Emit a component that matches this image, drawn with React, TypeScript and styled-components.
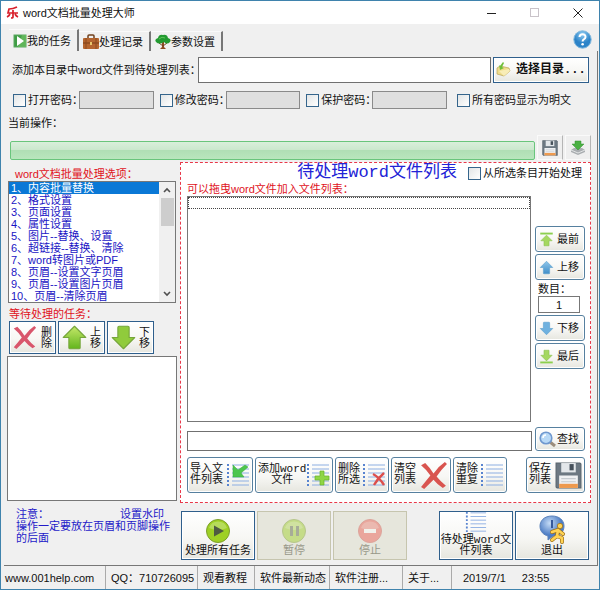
import React, { useState } from "react";
import styled, { createGlobalStyle, css } from "styled-components";

const sans = `"Liberation Sans", "Noto Sans CJK SC", sans-serif`;
const mono = `"Liberation Mono", "Noto Sans CJK SC", monospace`;

const GlobalStyle = createGlobalStyle`
  *, *::before, *::after { box-sizing: border-box; }
  body { margin: 0; background: #f0f0f0; }
  button, input { font: inherit; color: inherit; margin: 0; }
  svg { display: block; flex: none; }
`;

const Window = styled.div`
  min-height: 100vh;
  display: flex;
  flex-direction: column;
  border: 1px solid #3f83ad;
  background: #f0f0f0;
  color: #111;
  font: 11px/12px ${sans};
`;

const TitleBar = styled.header`
  height: 23px;
  display: flex;
  align-items: center;
  background: #fff;
  padding-left: 5px;
`;

const AppTitle = styled.h1`
  margin: 0 auto 0 4px;
  font-size: 11px;
  font-weight: 400;
`;

const CaptionButton = styled.button`
  width: 43px;
  height: 22px;
  padding: 0;
  display: grid;
  place-items: center;
  border: 0;
  background: none;
`;

const TabBar = styled.nav`
  height: 27px;
  display: flex;
  align-items: flex-end;
  padding: 0 7px 0 8px;
`;

const Tab = styled.button<{ $active?: boolean }>`
  height: ${(p) => (p.$active ? 22 : 20)}px;
  display: flex;
  align-items: center;
  padding: 0 6px 0 4px;
  border: 0;
  border-top: 1px solid #fafafa;
  border-right: 2px solid #777;
  background: #f0f0f0;
`;

const HelpButton = styled.button`
  margin: 0 0 2px auto;
  padding: 0;
  border: 0;
  background: none;
`;

const Body = styled.main`
  flex: 1;
  display: flex;
  flex-direction: column;
  margin-right: 1px;
  padding: 6px 6px 5px;
  border-right: 1px solid #777;
`;

const PathRow = styled.div`
  display: flex;
  align-items: center;
  gap: 2px;
  padding: 0 2px 0 5px;
`;

const PathLabel = styled.label`
  width: 184px;
  white-space: nowrap;
`;

const TextInput = styled.input`
  flex: 1;
  min-width: 0;
  height: 26px;
  padding: 0 4px;
  border: 1px solid #707070;
  background: #fff;
`;

const raised = css`
  border: 1px solid #2f5f8c;
  background: linear-gradient(#fff, #f7f7f4 55%, #e6e6df);
  box-shadow: inset 0 0 0 1px #fff;
`;

const BrowseButton = styled.button`
  ${raised}
  width: 96px;
  height: 26px;
  display: flex;
  align-items: center;
  gap: 5px;
  padding: 0 2px;
  font: 700 12px/14px ${mono};
  white-space: nowrap;
`;

const PasswordRow = styled.div`
  display: flex;
  align-items: center;
  gap: 6px;
  margin-top: 8px;
  padding: 0 20px 0 6px;
`;

const PasswordGroup = styled.div`
  flex: 1;
  display: flex;
  align-items: center;
`;

const CheckLabel = styled.label`
  display: flex;
  align-items: center;
  gap: 2px;
  white-space: nowrap;
`;

const CheckBox = styled.input.attrs({ type: "checkbox" })`
  appearance: none;
  width: 13px;
  height: 13px;
  flex: none;
  border: 1px solid #35658c;
  background: linear-gradient(135deg, #e2e5e6, #fff);
  &:checked { background: #35658c; }
`;

const PasswordLabel = styled(CheckLabel)`
  width: 66px;
`;

const ShowAllLabel = styled(CheckLabel)`
  margin-left: 4px;
`;

const PasswordInput = styled.input`
  flex: 1;
  width: 0;
  min-width: 0;
  height: 18px;
  border: 1px solid #8a8a8a;
  background: #dfdfdf;
`;

const CurrentLabel = styled.div`
  margin-top: 8px;
  padding-left: 1px;
`;

const ProgressRow = styled.div`
  display: flex;
  align-items: flex-end;
  gap: 2px;
  margin-top: 6px;
  padding-left: 3px;
`;

const Progress = styled.div`
  flex: 1;
  height: 19px;
  border: 1px solid #69c57c;
  border-radius: 2px;
  background: linear-gradient(#d9efdb, #cbe8ce 45%, #b0dfb5 50%, #b9e6bd);
`;

const FlatButton = styled.button`
  width: 26px;
  height: 25px;
  padding: 0;
  display: grid;
  place-items: center;
  border: 1px solid #fafafa;
  border-right-color: #b5b5b5;
  background: #efefef;
`;

const Workspace = styled.div`
  flex: 1;
  display: grid;
  grid-template-columns: 170px minmax(0, 1fr);
  grid-template-rows: 1fr auto;
  column-gap: 3px;
  margin-top: 2px;
`;

const Sidebar = styled.section`
  display: flex;
  flex-direction: column;
  padding: 6px 0 2px;
`;

const RedLabel = styled.h2<{ $indent?: number }>`
  margin: 0;
  padding-left: ${(p) => p.$indent ?? 0}px;
  font-size: 11px;
  line-height: 13px;
  font-weight: 400;
  color: #e0131c;
`;

const OptionFrame = styled.div`
  display: flex;
  height: 122px;
  margin: 0 1px 5px;
  border: 1px solid #777;
  background: #fff;
`;

const OptionList = styled.ul`
  flex: 1;
  margin: 0;
  padding: 0;
  list-style: none;
  color: #1a14c4;
`;

const OptionItem = styled.li<{ $selected: boolean }>`
  height: 12px;
  padding-left: 2px;
  white-space: nowrap;
  cursor: default;
  ${(p) => p.$selected && css`background: #0a78d6; color: #fff;`}
`;

const ScrollTrack = styled.div`
  width: 16px;
  display: flex;
  flex-direction: column;
  align-items: center;
  background: #f0f0f0;
`;

const ScrollArrow = styled.button`
  height: 16px;
  padding: 0;
  display: grid;
  place-items: center;
  border: 0;
  background: none;
`;

const ScrollThumb = styled.div`
  width: 13px;
  height: 28px;
  margin-bottom: auto;
  background: #cdcdcd;
`;

const TaskButtons = styled.div`
  display: flex;
  gap: 2px;
  margin: 0 0 2px 2px;
`;

const TaskButton = styled.button`
  ${raised}
  width: 47px;
  height: 33px;
  display: flex;
  align-items: center;
  justify-content: space-between;
  padding: 0 3px 0 2px;
  line-height: 11px;
`;

const VerticalText = styled.span`
  width: 11px;
  text-align: center;
`;

const TaskBox = styled.div`
  flex: 1;
  border: 1px solid #777;
  background: #fff;
`;

const FilePanel = styled.section`
  display: flex;
  flex-direction: column;
  padding: 0 5px 9px 6px;
  border: 1px dashed #e8384a;
  background: #fff;
`;

const PanelHeader = styled.div`
  display: flex;
  align-items: center;
  justify-content: flex-end;
  gap: 11px;
  height: 20px;
  padding-right: 3px;
`;

const PanelTitle = styled.h2`
  margin: 0;
  font: 400 17px/20px ${mono};
  color: #2222d6;
`;

const FileArea = styled.div`
  flex: 1;
  display: flex;
  gap: 4px;
`;

const FileList = styled.div`
  flex: 1;
  border: 1px solid #777;
  background: #fff;
`;

const FocusRow = styled.div`
  height: 12px;
  border: 1px dotted #444;
`;

const SideColumn = styled.div`
  width: 50px;
  display: flex;
  flex-direction: column;
  gap: 2px;
  padding-top: 30px;
`;

const SideButton = styled.button`
  ${raised}
  width: 50px;
  height: 26px;
  display: flex;
  align-items: center;
  justify-content: space-between;
  padding: 0 5px 0 3px;
  border-color: #56809f;
  border-radius: 3px;
  white-space: nowrap;
`;

const CountLabel = styled.label`
  padding-left: 3px;
  line-height: 14px;
  white-space: nowrap;
`;

const CountInput = styled.input`
  display: block;
  width: 42px;
  height: 17px;
  padding: 0;
  border: 1px solid #777;
  background: #fff;
  text-align: center;
`;

const SearchRow = styled.div`
  display: flex;
  align-items: flex-end;
  gap: 3px;
  margin-top: 5px;
`;

const SearchInput = styled(TextInput)`
  height: 20px;
`;

const SearchButton = styled(SideButton)`
  height: 24px;
`;

const Toolbar = styled.div`
  display: flex;
  gap: 2px;
  margin-top: 6px;
`;

const ToolButton = styled.button<{ $width: number; $end?: boolean }>`
  ${raised}
  width: ${(p) => p.$width}px;
  height: 36px;
  display: flex;
  align-items: center;
  justify-content: space-between;
  padding: 0 2px;
  border-color: #56809f;
  border-radius: 3px;
  font: 11px/11px ${mono};
  white-space: pre;
  ${(p) => p.$end && css`margin-left: auto;`}
`;

const Note = styled.p`
  margin: 5px 0 0;
  padding: 0 3px 0 9px;
  white-space: pre-wrap;
  color: #2419c8;
`;

const NoteGap = styled.span`
  display: inline-block;
  width: 71px;
`;

const Actions = styled.div`
  display: flex;
  gap: 2px;
  padding: 8px 2px 0 1px;
`;

const ActionButton = styled.button<{ $end?: boolean }>`
  ${raised}
  width: 74px;
  height: 49px;
  display: flex;
  flex-direction: column;
  align-items: center;
  justify-content: flex-end;
  gap: 2px;
  padding: 0 0 2px;
  font: 11px/11px ${mono};
  white-space: pre;
  ${(p) => p.$end && css`margin-left: auto;`}
  &:disabled {
    color: #98988a;
    border-color: #c6c5ae;
    background: #e6e6dc;
    box-shadow: none;
  }
  &:disabled svg { opacity: 0.45; }
`;

const StatusBar = styled.footer`
  height: 24px;
  display: flex;
  margin: 0 1px 0 3px;
  border-top: 1px solid #777;
`;

const StatusCell = styled.div<{ $width?: number }>`
  ${(p) => (p.$width ? css`width: ${p.$width}px;` : css`flex: 1;`)}
  display: flex;
  align-items: center;
  gap: 16px;
  padding-left: ${(p) => (p.$width ? 5 : 11)}px;
  border-right: ${(p) => (p.$width ? "1px solid #aaa" : "0")};
  white-space: nowrap;
  &:first-child { padding-left: 1px; }
`;

const StatusLink = styled.a`
  color: inherit;
  text-decoration: none;
`;

function Gradients() {
  return (
    <svg width="0" height="0" aria-hidden="true">
      <defs>
        <linearGradient id="green" x2="0" y2="1">
          <stop stopColor="#c5e86a" />
          <stop offset="1" stopColor="#63b51d" />
        </linearGradient>
        <linearGradient id="blue" x2="0" y2="1">
          <stop stopColor="#8fc6ea" />
          <stop offset="1" stopColor="#3f8ec8" />
        </linearGradient>
        <radialGradient id="bubble" cx=".4" cy=".3">
          <stop stopColor="#c5dcf6" />
          <stop offset="1" stopColor="#4c7cc4" />
        </radialGradient>
        <radialGradient id="help" cx=".5" cy=".2">
          <stop stopColor="#8fccf2" />
          <stop offset="1" stopColor="#2c83c8" />
        </radialGradient>
      </defs>
    </svg>
  );
}

type ArrowProps = { size: number; fill: string; stroke: string; down?: boolean; bar?: boolean };

function Arrow({ size, fill, stroke, down, bar }: ArrowProps) {
  return (
    <svg width={size} height={size} viewBox="0 0 24 24">
      <g transform={down ? "rotate(180 12 12)" : undefined}>
        <path
          d={bar ? "M12 5 21 14H16V22H8V14H3Z" : "M12 2 22 12H17V21Q17 22 16 22H8Q7 22 7 21V12H2Z"}
          fill={fill}
          stroke={stroke}
          strokeLinejoin="round"
        />
        {bar && <rect x="2" y="1" width="20" height="3" fill="#8ccf4f" />}
      </g>
    </svg>
  );
}

function Floppy({ size }: { size: number }) {
  return (
    <svg width={size} height={size} viewBox="0 0 26 26">
      <path d="M1 1H24L25 2V25H2L1 24Z" fill="#6c7882" stroke="#59646d" />
      <rect x="6" y="1" width="14" height="9" fill="#e3e7ea" />
      <rect x="14" y="2" width="4" height="6" fill="#46515b" />
      <rect x="4" y="13" width="18" height="12" fill="#eff1f3" />
      <path d="M6 16H20M6 19H20" stroke="#c5cbd0" />
      <rect x="4" y="21" width="18" height="4" fill="#ee9a4e" />
    </svg>
  );
}

function Cross({ size, fill }: { size: number; fill: string }) {
  return (
    <svg width={size} height={size} viewBox="0 0 28 28">
      <path
        d="M2 4 6 2Q11 7 14 12Q19 5 25 1L27 3Q21 9 17 15Q21 20 26 24L23 26Q18 23 14 18Q9 23 5 27L2 25Q7 19 11 14Q7 8 2 4Z"
        fill={fill}
      />
    </svg>
  );
}

function ListIcon({ mark, size = 24 }: { mark?: "import" | "add" | "delete"; size?: number }) {
  return (
    <svg width={size} height={size} viewBox="0 0 24 24">
      <path d="M2 1V24" stroke="#5884d0" strokeWidth="2" strokeDasharray="2 2" />
      <path d="M6 2H23M6 6H23M6 10H23M6 14H23M6 18H23M6 22H23" stroke="#8caee2" />
      {mark === "import" && (
        <path d="M7 2V14H18L15 10 22 4 19 2 12 7Z" fill="#4dc64e" stroke="#36a839" strokeWidth=".5" />
      )}
      {mark === "add" && (
        <path d="M14 8H18V13H23V17H18V22H14V17H9V13H14Z" fill="#8fd645" stroke="#68b22a" strokeWidth=".7" />
      )}
      {mark === "delete" && (
        <path d="M11 11Q17 14 22 22M22 10Q16 15 12 22" stroke="#dc4f4c" strokeWidth="2.4" fill="none" />
      )}
    </svg>
  );
}

function Disc({ kind }: { kind: "play" | "pause" | "stop" }) {
  const stop = kind === "stop";
  return (
    <svg width="26" height="26" viewBox="0 0 26 26">
      <circle cx="13" cy="13" r="11.5" fill={stop ? "#ef5a50" : "#9ed024"} stroke={stop ? "#d0554e" : "#7d9f2c"} />
      <path d="M4 10A9.5 9.5 0 0 1 22 10Q13 14 4 10Z" fill="#fff" opacity=".25" />
      {kind === "play" && <path d="M9 7.5V18.5L19 13Z" fill="#4f5a42" />}
      {kind === "pause" && <path d="M9 8H12V18H9ZM15 8H18V18H15Z" fill="#5b6848" />}
      {stop && <rect x="7" y="11" width="12" height="4" fill="#fff" />}
    </svg>
  );
}

const LogoIcon = () => (
  <svg width="13" height="13" viewBox="0 0 13 13">
    <path
      d="M11 1Q7 3 3 3L2 7H12M7 4V11Q7 12 5 12M4 8Q3 10 1 11M9 8Q10 10 12 11"
      fill="none"
      stroke="#d81f2a"
      strokeWidth="1.7"
    />
  </svg>
);

const TaskIcon = () => (
  <svg width="14" height="14" viewBox="0 0 14 14">
    <rect x="1" y="1" width="12" height="12" fill="#3f9d45" stroke="#5aa860" />
    <path d="M9 1H13V13H5Z" fill="#74c468" opacity=".6" />
    <path d="M4 2V12L11 7Z" fill="#fff" />
  </svg>
);

const CaseIcon = () => (
  <svg width="16" height="16" viewBox="0 0 16 16">
    <path d="M5 4V2Q5 1 6 1H10Q11 1 11 2V4" fill="none" stroke="#70401d" strokeWidth="1.5" />
    <rect x="0" y="4" width="16" height="11" rx="1" fill="#b5652f" />
    <path d="M0 9H16" stroke="#7a3e17" />
    <path d="M3 4V15M13 4V15" stroke="#8d4b1f" />
    <rect x="7" y="8" width="2" height="3" fill="#eac66c" />
  </svg>
);

const TreeIcon = () => (
  <svg width="16" height="16" viewBox="0 0 16 16">
    <path d="M7 8H9V13L11 15H5L7 13Z" fill="#8d4b22" />
    <path d="M4 9 8 12 12 9" stroke="#7a4020" fill="none" />
    <path d="M1 8Q-1 5 3 4Q4 0 8 1Q12 0 13 4Q17 5 15 8Q12 11 9 8Q4 11 1 8Z" fill="#239a31" />
    <path d="M4 5Q7 2 10 4" stroke="#5fc85a" fill="none" />
  </svg>
);

const HelpIcon = () => (
  <svg width="19" height="19" viewBox="0 0 19 19">
    <circle cx="9.5" cy="9.5" r="8.7" fill="url(#help)" stroke="#82b9de" />
    <path d="M6.5 7Q6.7 4.3 9.6 4.3T12.5 7Q12.5 8.5 10.8 9.4Q9.6 10 9.6 11.5" fill="none" stroke="#fff" strokeWidth="2" />
    <circle cx="9.6" cy="14.2" r="1.3" fill="#fff" />
  </svg>
);

const FolderIcon = () => (
  <svg width="15" height="18" viewBox="0 0 15 18">
    <path d="M1 7 4 5 13 7 14 10 8 15 1 13Z" fill="#efdc8a" stroke="#b9a457" strokeWidth=".7" />
    <path d="M3 10 13 8 14 10 8 15Z" fill="#f8edb6" />
    <path d="M7 1 4 5 3 4 4 9 8 7 6 6 8 2Z" fill="#6fbf3a" />
  </svg>
);

const DownloadIcon = () => (
  <svg width="16" height="17" viewBox="0 0 16 17">
    <path d="M1 11 4 9H12L15 11V13L8 16 1 13Z" fill="#a9adb0" />
    <path d="M1 11 8 14 15 11" fill="none" stroke="#e2e4e5" />
    <path d="M5 2H11V5H14L8 11 2 5H5Z" fill="#4bb043" stroke="#328d30" strokeWidth=".5" />
  </svg>
);

const SearchIcon = () => (
  <svg width="17" height="17" viewBox="0 0 17 17">
    <path d="M11 11 16 15" stroke="#9b8d7c" strokeWidth="3" />
    <circle cx="7" cy="7" r="5.8" fill="#b8d9f6" stroke="#6f98cf" strokeWidth="1.6" />
    <path d="M4 7Q4 4 7 4" stroke="#fff" strokeWidth="1.5" fill="none" />
  </svg>
);

const ExitIcon = () => (
  <svg width="29" height="30" viewBox="0 0 29 30">
    <path d="M14 2C6 2 2 7 2 12C2 18 6 21 10 22L10 26 15 22C22 22 26 18 26 12C26 6 21 2 14 2Z" fill="url(#bubble)" stroke="#5c83bb" />
    <path d="M14 6V14" stroke="#35599b" strokeWidth="2" />
    <g fill="none" stroke="#9c701a" strokeWidth="4" strokeLinecap="round" strokeLinejoin="round">
      <path d="M20 16 19 22 24 24 24 28M19 22 14 26M14 18 20 16 25 20" />
    </g>
    <g fill="none" stroke="#ffd354" strokeWidth="2.6" strokeLinecap="round" strokeLinejoin="round">
      <path d="M20 16 19 22 24 24 24 28M19 22 14 26M14 18 20 16 25 20" />
    </g>
    <circle cx="22" cy="12" r="2.7" fill="#ffd354" stroke="#9c701a" strokeWidth=".8" />
  </svg>
);

const Chevron = ({ down }: { down?: boolean }) => (
  <svg width="8" height="6" viewBox="0 0 8 6">
    <path d={down ? "M1 1 4 4 7 1" : "M1 5 4 2 7 5"} fill="none" stroke="#505050" strokeWidth="1.6" />
  </svg>
);

const options = [
  "1、内容批量替换",
  "2、格式设置",
  "3、页面设置",
  "4、属性设置",
  "5、图片--替换、设置",
  "6、超链接--替换、清除",
  "7、word转图片或PDF",
  "8、页眉--设置文字页眉",
  "9、页眉--设置图片页眉",
  "10、页眉--清除页眉",
];

const passwords = ["打开密码：", "修改密码：", "保护密码："];

export default function App() {
  const [selected, setSelected] = useState(0);
  return (
    <Window>
      <GlobalStyle />
      <TitleBar>
        <LogoIcon />
        <AppTitle>word文档批量处理大师</AppTitle>
        <CaptionButton aria-label="最小化">
          <svg width="10" height="10"><path d="M0 5.5H9" stroke="#222" /></svg>
        </CaptionButton>
        <CaptionButton aria-label="最大化" disabled>
          <svg width="10" height="10"><rect x=".5" y=".5" width="8" height="8" fill="none" stroke="#c9c3c9" /></svg>
        </CaptionButton>
        <CaptionButton aria-label="关闭">
          <svg width="10" height="10"><path d="M.5.5 9.5 9.5M9.5.5.5 9.5" stroke="#222" /></svg>
        </CaptionButton>
      </TitleBar>

      <TabBar>
        <Tab $active><TaskIcon />我的任务</Tab>
        <Tab><CaseIcon />处理记录</Tab>
        <Tab><TreeIcon />参数设置</Tab>
        <HelpButton aria-label="帮助"><HelpIcon /></HelpButton>
      </TabBar>

      <Body>
        <PathRow>
          <PathLabel htmlFor="path">添加本目录中word文件到待处理列表：</PathLabel>
          <TextInput id="path" />
          <BrowseButton><FolderIcon />选择目录...</BrowseButton>
        </PathRow>

        <PasswordRow>
          {passwords.map((label) => (
            <PasswordGroup key={label}>
              <PasswordLabel><CheckBox />{label}</PasswordLabel>
              <PasswordInput type="password" aria-label={label} disabled />
            </PasswordGroup>
          ))}
          <ShowAllLabel><CheckBox />所有密码显示为明文</ShowAllLabel>
        </PasswordRow>

        <CurrentLabel>当前操作：</CurrentLabel>
        <ProgressRow>
          <Progress role="progressbar" aria-label="当前操作" />
          <FlatButton aria-label="保存"><Floppy size={16} /></FlatButton>
          <FlatButton aria-label="下载"><DownloadIcon /></FlatButton>
        </ProgressRow>

        <Workspace>
          <Sidebar>
            <RedLabel $indent={8}>word文档批量处理选项：</RedLabel>
            <OptionFrame>
              <OptionList role="listbox">
                {options.map((text, i) => (
                  <OptionItem
                    key={text}
                    role="option"
                    aria-selected={i === selected}
                    $selected={i === selected}
                    onClick={() => setSelected(i)}
                  >
                    {text}
                  </OptionItem>
                ))}
              </OptionList>
              <ScrollTrack>
                <ScrollArrow aria-label="向上滚动"><Chevron /></ScrollArrow>
                <ScrollThumb />
                <ScrollArrow aria-label="向下滚动"><Chevron down /></ScrollArrow>
              </ScrollTrack>
            </OptionFrame>
            <RedLabel $indent={2}>等待处理的任务：</RedLabel>
            <TaskButtons>
              <TaskButton><Cross size={25} fill="#d9566c" /><VerticalText>删除</VerticalText></TaskButton>
              <TaskButton>
                <Arrow size={27} fill="url(#green)" stroke="#76a63a" />
                <VerticalText>上移</VerticalText>
              </TaskButton>
              <TaskButton>
                <Arrow size={27} fill="#90cb3c" stroke="#76a63a" down />
                <VerticalText>下移</VerticalText>
              </TaskButton>
            </TaskButtons>
            <TaskBox />
          </Sidebar>

          <FilePanel>
            <PanelHeader>
              <PanelTitle>待处理word文件列表</PanelTitle>
              <CheckLabel><CheckBox />从所选条目开始处理</CheckLabel>
            </PanelHeader>
            <RedLabel>可以拖曳word文件加入文件列表：</RedLabel>
            <FileArea>
              <FileList><FocusRow /></FileList>
              <SideColumn>
                <SideButton><Arrow size={15} fill="#a5d860" stroke="#8cc152" bar />最前</SideButton>
                <SideButton><Arrow size={15} fill="url(#blue)" stroke="#5c9fce" />上移</SideButton>
                <CountLabel>数目：<CountInput defaultValue="1" /></CountLabel>
                <SideButton><Arrow size={15} fill="#6fb1df" stroke="#5c9fce" down />下移</SideButton>
                <SideButton><Arrow size={15} fill="#a5d860" stroke="#8cc152" bar down />最后</SideButton>
              </SideColumn>
            </FileArea>
            <SearchRow>
              <SearchInput aria-label="查找" />
              <SearchButton><SearchIcon />查找</SearchButton>
            </SearchRow>
            <Toolbar>
              <ToolButton $width={66}>{"导入文\n件列表"}<ListIcon mark="import" /></ToolButton>
              <ToolButton $width={78}>{"添加word\n文件"}<ListIcon mark="add" /></ToolButton>
              <ToolButton $width={54}>{"删除\n所选"}<ListIcon mark="delete" /></ToolButton>
              <ToolButton $width={60}>{"清空\n列表"}<Cross size={29} fill="#d9544f" /></ToolButton>
              <ToolButton $width={54}>{"清除\n重复"}<ListIcon /></ToolButton>
              <ToolButton $width={59} $end>{"保存\n列表"}<Floppy size={27} /></ToolButton>
            </Toolbar>
          </FilePanel>

          <Note>注意：<NoteGap />设置水印<br />操作一定要放在页眉和页脚操作的后面</Note>
          <Actions>
            <ActionButton><Disc kind="play" />处理所有任务</ActionButton>
            <ActionButton disabled><Disc kind="pause" />暂停</ActionButton>
            <ActionButton disabled><Disc kind="stop" />停止</ActionButton>
            <ActionButton $end><ListIcon size={22} />{"待处理word文\n件列表"}</ActionButton>
            <ActionButton><ExitIcon />退出</ActionButton>
          </Actions>
        </Workspace>
      </Body>

      <StatusBar>
        <StatusCell $width={102}><StatusLink href="#home">www.001help.com</StatusLink></StatusCell>
        <StatusCell $width={92}>QQ：710726095</StatusCell>
        <StatusCell $width={57}><StatusLink href="#tutorial">观看教程</StatusLink></StatusCell>
        <StatusCell $width={75}><StatusLink href="#news">软件最新动态</StatusLink></StatusCell>
        <StatusCell $width={73}><StatusLink href="#register">软件注册...</StatusLink></StatusCell>
        <StatusCell $width={49}><StatusLink href="#about">关于...</StatusLink></StatusCell>
        <StatusCell><time>2019/7/1</time><time>23:55</time></StatusCell>
      </StatusBar>
      <Gradients />
    </Window>
  );
}
